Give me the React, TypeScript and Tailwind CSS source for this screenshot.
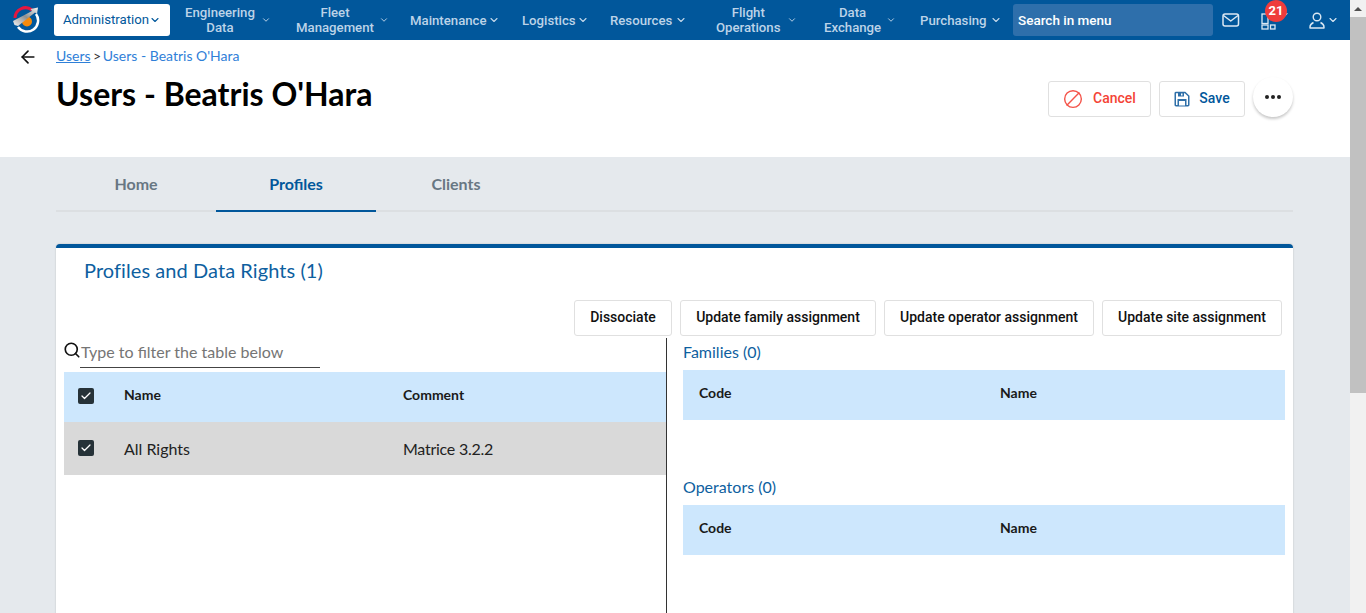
import React from "react";
import { ChevronDown, ArrowLeft, Ban, Search, Check } from "lucide-react";

const roboto = "font-['Roboto',sans-serif]";

function NavItem({ lines, w, ml, gap }: { lines: string[]; w: number; ml: number; gap: number }) {
  return (
    <div className="flex items-center shrink-0" style={{ width: w, marginLeft: ml, gap }}>
      <div className="text-center text-[13.2px] leading-[15px] font-medium text-[#bcd3e8] whitespace-nowrap">
        {lines.map((l) => (
          <div key={l}>{l}</div>
        ))}
      </div>
      <ChevronDown size={lines.length > 1 ? 10 : 12} strokeWidth={2.2} className="text-[#c4d8ea] shrink-0" />
    </div>
  );
}

function Box({ children, w }: { children: React.ReactNode; w: number }) {
  return (
    <button
      className="h-[36px] bg-white border border-[#e0e0e0] rounded-[3px] text-[14px] font-medium text-[#111] whitespace-nowrap"
      style={{ width: w }}
    >
      <span className="block -mt-[1px]">{children}</span>
    </button>
  );
}

function CheckBox() {
  return (
    <span className="w-4 h-4 rounded-[2px] bg-[#263238] flex items-center justify-center">
      <Check size={12} strokeWidth={2.5} className="text-white" />
    </span>
  );
}

function SubTable({ title }: { title: string }) {
  return (
    <div>
      <div className="text-[16px] leading-[20px] text-[#0e5f9f]">{title}</div>
      <div className="mt-[8px] h-[50px] bg-[#cde7fd] flex text-[14px] font-bold text-[#1a1a1a]">
        <div className="w-[317px] pl-4 pt-[12px]">Code</div>
        <div className="pt-[12px]">Name</div>
      </div>
    </div>
  );
}

export default function App() {
  return (
    <div className="w-[1366px] h-[613px] overflow-hidden flex font-['Lato',sans-serif]">
      <div className="w-[1350px] h-full overflow-hidden flex flex-col shrink-0">
        <header className={`h-[40px] bg-[#01579b] flex items-center shrink-0 ${roboto}`}>
          <svg width="28" height="28" viewBox="0 0 28 28" className="ml-[12px] shrink-0">
            <defs>
              <linearGradient id="streak" x1="0" y1="1" x2="1" y2="0">
                <stop offset="0" stopColor="#f4f4f4" />
                <stop offset="0.5" stopColor="#8f8f8f" />
                <stop offset="1" stopColor="#f4f4f4" />
              </linearGradient>
            </defs>
            <path d="M3 12 A10.5 10.5 0 0 1 20 4" fill="none" stroke="#e5173f" strokeWidth="3" />
            <path d="M6 21 A10.5 10.5 0 0 0 24 8" fill="none" stroke="#fff" strokeWidth="2.5" />
            <circle cx="15" cy="15.5" r="5" fill="#f58a0b" />
            <path d="M1 15 L20 5 L18.5 3 L26 1.5 L25 8 L23 6.5 L6 20 L2.5 19 Z" fill="url(#streak)" />
          </svg>
          <div className="ml-[14px] w-[116px] h-[32px] bg-white rounded-[3px] flex items-center justify-center text-[13.2px] text-[#01579b] shrink-0">
            Administration
            <ChevronDown size={12} strokeWidth={2.2} />
          </div>
          <NavItem lines={["Engineering", "Data"]} w={87} ml={15} gap={6} />
          <NavItem lines={["Fleet", "Management"]} w={93} ml={24} gap={5} />
          <NavItem lines={["Maintenance"]} w={89} ml={21} gap={1} />
          <NavItem lines={["Logistics"]} w={66} ml={23} gap={1} />
          <NavItem lines={["Resources"]} w={78} ml={22} gap={3} />
          <NavItem lines={["Flight", "Operations"]} w={82} ml={28} gap={7} />
          <NavItem lines={["Data", "Exchange"]} w={75} ml={26} gap={5} />
          <NavItem lines={["Purchasing"]} w={81} ml={21} gap={3} />
          <div className="ml-[12px] w-[200px] h-[32px] rounded-[3px] bg-[#2e6fab] flex items-center pl-[5px] text-[13.5px] font-medium text-white shrink-0">
            Search in menu
          </div>
          <svg width="18" height="14" viewBox="0 0 18 14" className="ml-[9px] shrink-0" fill="none" stroke="#dbe8f3" strokeWidth="1.5" strokeLinejoin="round">
            <rect x="1" y="1" width="15.5" height="12" rx="2" />
            <path d="M1.5 2.5 L8.75 8 L16 2.5" />
          </svg>
          <div className="relative ml-[21px] w-[28px] h-[16px] mt-[4px] shrink-0">
            <svg width="16" height="17" viewBox="0 0 16 17" fill="none" stroke="#dbe8f3" strokeWidth="1.3" className="absolute left-0 top-[-1px]">
              <rect x="1" y="1" width="6" height="9.5" />
              <rect x="1" y="12" width="6" height="4" />
              <rect x="9.5" y="12" width="4.5" height="4" />
            </svg>
            <ChevronDown size={12} strokeWidth={2.2} className="absolute left-[17px] top-[-5px] text-[#dbe8f3]" />
            <span className="absolute left-[4px] top-[-14px] w-[22px] h-[22px] rounded-full bg-[#ef3c3c] text-white text-[13px] font-bold flex items-center justify-center">
              21
            </span>
          </div>
          <svg width="16" height="17" viewBox="0 0 16 17" fill="none" stroke="#dbe8f3" strokeWidth="1.4" className="ml-[20px] mt-[1px] shrink-0">
            <circle cx="8" cy="5" r="3.8" />
            <path d="M4.5 10.5 C2.5 11.5 1 13 1 15 V16 H15 V15 C15 13 13.5 11.5 11.5 10.5" strokeLinejoin="round" />
          </svg>
          <ChevronDown size={12} strokeWidth={2.2} className="ml-[2px] text-[#dbe8f3] shrink-0" />
        </header>

        <section className="h-[117px] bg-white flex shrink-0 pr-[57px]">
          <ArrowLeft size={20} strokeWidth={2} className="ml-[18px] mt-[7px] text-[#111] shrink-0" />
          <div className="ml-[18px]">
            <div className="mt-[7px] text-[14px] leading-[17px] text-[#2f80d8]">
              <span className="underline">Users</span>
              <span className="text-[#333] tracking-[-1px]"> &gt; </span>Users - Beatris O'Hara
            </div>
            <h1 className="mt-[8px] text-[32px] leading-[44px] font-bold text-black">Users - Beatris O'Hara</h1>
          </div>
          <div className={`ml-auto flex items-start mt-[41px] ${roboto}`}>
            <button className="w-[103px] h-[36px] border border-[#e0e0e0] rounded-[3px] flex items-center justify-center gap-[10px] text-[14px] font-medium text-[#f44336]">
              <Ban size={20} strokeWidth={1.7} className="-scale-x-100 text-[#f4544a]" />
              <span className="-mt-[1px]">Cancel</span>
            </button>
            <button className="ml-[8px] w-[86px] h-[36px] border border-[#e0e0e0] rounded-[3px] flex items-center justify-center gap-[9px] text-[14px] font-medium text-[#01579b]">
              <svg width="16" height="16" viewBox="0 0 16 16" className="shrink-0">
                <path d="M2 1.5 H11 L14.75 5 V14 A0.75 0.75 0 0 1 14 14.75 H2 A0.75 0.75 0 0 1 1.25 14 V2 A0.75 0.75 0 0 1 2 1.5 Z" fill="#fff" stroke="#2f6fa8" strokeWidth="1.5" />
                <rect x="4" y="1.5" width="6" height="4" fill="#2f6fa8" />
                <rect x="7" y="2.5" width="1.5" height="2" fill="#fff" />
                <rect x="3.5" y="8" width="9" height="6.5" fill="#2f6fa8" />
                <rect x="5" y="10" width="6" height="4.5" fill="#fff" />
              </svg>
              <span className="-mt-[1px]">Save</span>
            </button>
            <button className="ml-[8px] -mt-[4px] w-[40px] h-[40px] rounded-full bg-white shadow-[0_2px_3px_rgba(0,0,0,0.22)] flex items-center justify-center gap-[2px]">
              <span className="w-[4px] h-[4px] rounded-full bg-[#222]" />
              <span className="w-[4px] h-[4px] rounded-full bg-[#222]" />
              <span className="w-[4px] h-[4px] rounded-full bg-[#222]" />
            </button>
          </div>
        </section>

        <main className="flex-1 bg-[#e5e9ed] pl-[56px] pr-[57px] min-h-0">
          <div className="flex h-[55px] border-b-2 border-[#dcdfe2] text-[16px] font-bold text-center">
            <div className="w-[160px] pt-[15px] text-[#687783]">Home</div>
            <div className="w-[160px] h-[55px] pt-[15px] text-[#01579b] border-b-2 border-[#01579b]">Profiles</div>
            <div className="w-[160px] pt-[15px] text-[#687783]">Clients</div>
          </div>

          <div className="mt-[32px] h-[400px] bg-white border-t-4 border-[#01579b] rounded-t-[4px] shadow-[0_0_2px_rgba(0,0,0,0.2)]">
            <div className="pl-[28px] pt-[9px] h-[52px] text-[20px] leading-[27px] tracking-[0.07px] text-[#0e5f9f]">Profiles and Data Rights (1)</div>
            <div className={`flex justify-end gap-[8px] pr-[11px] ${roboto}`}>
              <Box w={98}>Dissociate</Box>
              <Box w={196}>Update family assignment</Box>
              <Box w={210}>Update operator assignment</Box>
              <Box w={180}>Update site assignment</Box>
            </div>
            <div className="flex mt-[2px] h-[300px]">
              <div className="ml-[8px] w-[603px] border-r border-[#333] shrink-0">
                <div className="h-[34px] flex items-start relative">
                  <Search size={18} strokeWidth={2.2} className="absolute left-[-1px] top-[3px] text-[#111]" />
                  <div className="ml-[16px] w-[240px] h-[30px] border-b border-[#444] pl-[1px] pt-[4px] text-[16px] leading-[20px] text-[#757575]">
                    Type to filter the table below
                  </div>
                </div>
                <div className="h-[50px] bg-[#cde7fd] flex items-center text-[14px] font-bold text-[#1a1a1a]">
                  <div className="w-[60px] pl-[14px] -mt-[3px]"><CheckBox /></div>
                  <div className="w-[279px] -mt-[5px]">Name</div>
                  <div className="-mt-[5px]">Comment</div>
                </div>
                <div className="h-[53px] bg-[#d9d9d9] flex items-center text-[16px] text-[#222]">
                  <div className="w-[60px] pl-[14px] -mt-[1px]"><CheckBox /></div>
                  <div className="w-[279px]">All Rights</div>
                  <div className="tracking-[-0.25px]">Matrice 3.2.2</div>
                </div>
              </div>
              <div className="ml-[16px] w-[602px] flex flex-col gap-[57px] pt-[4px]">
                <SubTable title="Families (0)" />
                <SubTable title="Operators (0)" />
              </div>
            </div>
          </div>
        </main>
      </div>

      <div className="w-[16px] h-full bg-[#f1f1f1] flex flex-col items-center shrink-0">
        <div className="h-[17px] flex items-center justify-center">
          <div className="w-0 h-0 border-x-[4px] border-x-transparent border-b-[4px] border-b-[#505050]" />
        </div>
        <div className="w-full h-[376px] bg-[#c1c1c1]" />
      </div>
    </div>
  );
}
